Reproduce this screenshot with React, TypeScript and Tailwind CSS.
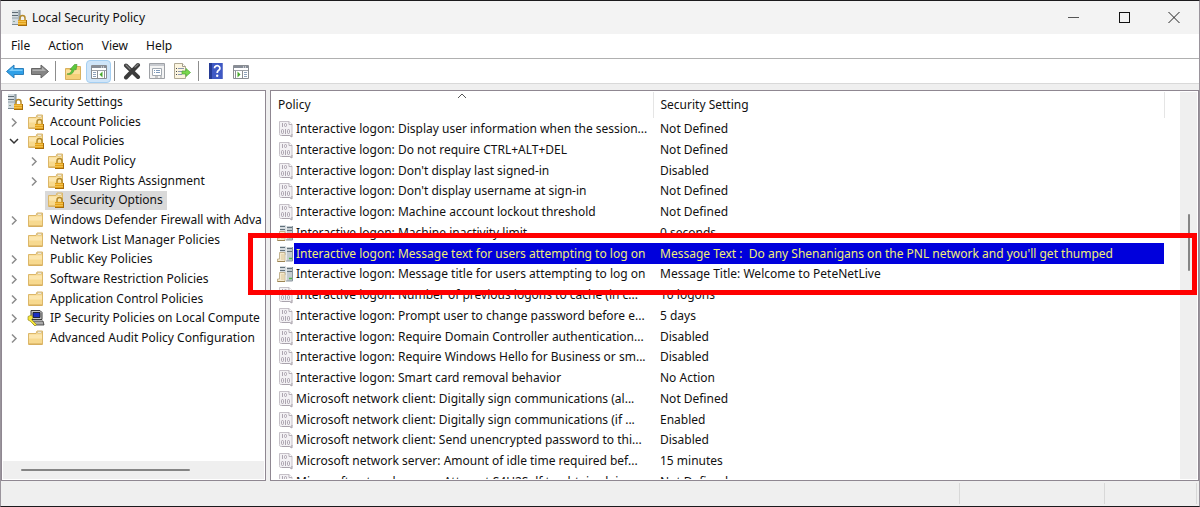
import React from 'react';
import { clsx } from 'clsx';

interface TreeNode {
  label: string;
  level: 0 | 1 | 2;
  icon: 'server' | 'locked' | 'folder' | 'computer';
  state?: 'open' | 'closed';
  selected?: boolean;
}

interface Policy {
  name: string;
  setting: string;
  icon?: 'server';
  selected?: boolean;
}

const treeNodes: TreeNode[] = [
  { label: 'Security Settings', level: 0, icon: 'server' },
  { label: 'Account Policies', level: 1, icon: 'locked', state: 'closed' },
  { label: 'Local Policies', level: 1, icon: 'locked', state: 'open' },
  { label: 'Audit Policy', level: 2, icon: 'locked', state: 'closed' },
  { label: 'User Rights Assignment', level: 2, icon: 'locked', state: 'closed' },
  { label: 'Security Options', level: 2, icon: 'locked', selected: true },
  { label: 'Windows Defender Firewall with Adva', level: 1, icon: 'folder', state: 'closed' },
  { label: 'Network List Manager Policies', level: 1, icon: 'folder' },
  { label: 'Public Key Policies', level: 1, icon: 'folder', state: 'closed' },
  { label: 'Software Restriction Policies', level: 1, icon: 'folder', state: 'closed' },
  { label: 'Application Control Policies', level: 1, icon: 'folder', state: 'closed' },
  { label: 'IP Security Policies on Local Compute', level: 1, icon: 'computer', state: 'closed' },
  { label: 'Advanced Audit Policy Configuration', level: 1, icon: 'folder', state: 'closed' },
];

const policies: Policy[] = [
  { name: 'Interactive logon: Display user information when the session...', setting: 'Not Defined' },
  { name: 'Interactive logon: Do not require CTRL+ALT+DEL', setting: 'Not Defined' },
  { name: "Interactive logon: Don't display last signed-in", setting: 'Disabled' },
  { name: "Interactive logon: Don't display username at sign-in", setting: 'Not Defined' },
  { name: 'Interactive logon: Machine account lockout threshold', setting: 'Not Defined' },
  { name: 'Interactive logon: Machine inactivity limit', setting: '0 seconds', icon: 'server' },
  {
    name: 'Interactive logon: Message text for users attempting to log on',
    setting: "Message Text :  Do any Shenanigans on the PNL network and you'll get thumped",
    icon: 'server',
    selected: true,
  },
  {
    name: 'Interactive logon: Message title for users attempting to log on',
    setting: 'Message Title: Welcome to PeteNetLive',
    icon: 'server',
  },
  { name: 'Interactive logon: Number of previous logons to cache (in c...', setting: '10 logons' },
  { name: 'Interactive logon: Prompt user to change password before e...', setting: '5 days' },
  { name: 'Interactive logon: Require Domain Controller authentication...', setting: 'Disabled' },
  { name: 'Interactive logon: Require Windows Hello for Business or sm...', setting: 'Disabled' },
  { name: 'Interactive logon: Smart card removal behavior', setting: 'No Action' },
  { name: 'Microsoft network client: Digitally sign communications (al...', setting: 'Not Defined' },
  { name: 'Microsoft network client: Digitally sign communications (if ...', setting: 'Enabled' },
  { name: 'Microsoft network client: Send unencrypted password to thi...', setting: 'Disabled' },
  { name: 'Microsoft network server: Amount of idle time required bef...', setting: '15 minutes' },
  { name: 'Microsoft network server: Attempt S4U2Self to obtain claim ...', setting: 'Not Defined' },
];

function Padlock() {
  return (
    <g>
      <path d="M10 11V9a2.5 2.5 0 0 1 5 0v2" fill="none" stroke="#b58a2c" strokeWidth="1.5" />
      <rect x="8" y="11" width="9" height="6" fill="#e3a21c" />
      <path d="M8 12.5h9M8 14.5h9" stroke="#f6c95a" strokeWidth="0.8" />
      <path d="M8 16.5h9M16.5 11v6" stroke="#a56c0d" strokeWidth="1" />
    </g>
  );
}

function ServerLockIcon({ className }: { className?: string }) {
  return (
    <svg viewBox="0 0 18 18" className={className} aria-hidden="true">
      <path d="M2 1h8v15H2z" fill="#aab5bc" />
      <path d="M2 1h6v15H2z" fill="#d3dbe0" />
      <path d="M2 3.500h6M2 6.500h6" stroke="#5e6b75" />
      <path d="M2 9h6" stroke="#93a0a9" />
      <path d="M10 1v9" stroke="#7d8a93" />
      <path d="M2 15.500h7" stroke="#7d8a93" />
      <path d="M3 12.500h2" stroke="#8fa59a" />
      <Padlock />
    </svg>
  );
}

function FolderIcon({ locked, className }: { locked?: boolean; className?: string }) {
  return (
    <svg viewBox="0 0 18 18" className={className} aria-hidden="true">
      <path d="M1.500 4.500h7.500l1-2.500h5.500v13.500h-14z" fill="#f7d98f" stroke="#dcb769" />
      <path d="M2 5.500h13v4H2z" fill="#fce6ae" />
      <path d="M10.500 2.500h4v1.500h-4z" fill="#fff" stroke="#c9b37c" strokeWidth="0.6" />
      <path d="M2 15h13" stroke="#d0a654" />
      {locked && <Padlock />}
    </svg>
  );
}

function ComputerIcon({ className }: { className?: string }) {
  return (
    <svg viewBox="0 0 18 18" className={className} aria-hidden="true">
      <path d="M4 1.500h9l2 2v7H5l-1-2z" fill="#c4c4c4" stroke="#3a3a3a" />
      <path d="M6 3.500h7v5H6z" fill="#1b2fc0" stroke="#111" strokeWidth="0.8" />
      <path d="M5 12h11l1 4H7z" fill="#a9a9a9" stroke="#333" strokeWidth="0.8" />
      <path d="M1 7.500 4.500 6l1.500 3-1.500 1.500 5 5-1.500 1.500-5-5L1 11z" fill="#f5e53b" stroke="#8a7c10" strokeWidth="0.6" />
    </svg>
  );
}

function BinaryDocIcon({ className }: { className?: string }) {
  return (
    <svg viewBox="0 0 16 18" className={className} aria-hidden="true">
      <path d="M1.500 1.500h9.500l3 3v9.500c0 2-1 2.500-2 1.500H3c-1.500 0-1.500-1-1.500-2z" fill="#f3f1f4" stroke="#c6c1c8" />
      <path d="M11 1.500v3h3" fill="#fff" stroke="#b5afb8" />
      <path d="M4 15.500h7.500l2.500 1.500v-3" fill="none" stroke="#aaa4ad" />
      <g fill="none" stroke="#a49ca8" strokeWidth="0.9">
        <path d="M4.500 3v4M7.500 9v5" />
        <rect x="6.500" y="3.500" width="2" height="3" rx="1" />
        <rect x="3.500" y="9.500" width="2" height="4" rx="1" />
        <rect x="9.500" y="9.500" width="2" height="4" rx="1" />
      </g>
    </svg>
  );
}

function ServerPolicyIcon({ className }: { className?: string }) {
  return (
    <svg viewBox="0 0 17 18" className={className} aria-hidden="true">
      <path d="M3 1h6v9H3z" fill="#d5dbdf" />
      <path d="M9 2h7v14H9z" fill="#c2cacf" />
      <path d="M3 2.500h5M3 5.500h5M10 3.500h5M10 6.500h5" stroke="#62717b" />
      <path d="M9.500 2v14" stroke="#e7ebed" />
      <path d="M15.500 2v14H9" fill="none" stroke="#89959d" />
      <path d="M12 13.500h3" stroke="#4fb548" strokeWidth="1.500" />
      <path d="M2.500 7.500h5.500v9H.5v-2.500h2z" fill="#f5ead0" stroke="#b8a57c" strokeWidth="0.8" />
      <path d="M4 10h3M4 12h3M4 14h3" stroke="#d2bd8e" strokeWidth="0.8" />
      <path d="M.5 16.500h7.500" stroke="#9c8555" />
    </svg>
  );
}

function Chevron({ open }: { open?: boolean }) {
  return (
    <svg viewBox="0 0 12 12" className="size-3" fill="none" aria-hidden="true">
      {open ? (
        <path d="M2 4l4 4 4-4" stroke="#333" strokeWidth="1.5" />
      ) : (
        <path d="M4 2.500l4 4-4 4" stroke="#8c8c8c" strokeWidth="1.5" />
      )}
    </svg>
  );
}

function ArrowIcon({ forward }: { forward?: boolean }) {
  return forward ? (
    <svg viewBox="0 0 18 18" className="size-[18px]" aria-hidden="true">
      <path d="M.5 6.500H10V3l7.500 6.500L10 16v-3.500H.5z" fill="#858585" stroke="#666" />
      <path d="M1.500 7.500H11V5l4 4h-13.500z" fill="#b0b0b0" />
    </svg>
  ) : (
    <svg viewBox="0 0 18 18" className="size-[18px]" aria-hidden="true">
      <path d="M17.500 6.500H8V3L.5 9.500 8 16v-3.500h9.500z" fill="#2fa0e8" stroke="#2c7fbb" />
      <path d="M16.500 7.500H7V5L3 9h13.500z" fill="#79cbfa" />
    </svg>
  );
}

function UpFolderIcon() {
  return (
    <svg viewBox="0 0 18 18" className="size-[18px]" aria-hidden="true">
      <path d="M1.500 6.500h9l1-2h5v13h-15z" fill="#f5d078" stroke="#d8b05e" />
      <path d="M2 8h14v4H2z" fill="#fbe09b" />
      <path d="M3 12c3 0 4.500-2 5-4.500H6L10.500 2.500H13L12 8l-1.500-1C9.500 11 7 13.500 3 12z" fill="#5cc93d" stroke="#4d9c35" strokeWidth="0.7" />
    </svg>
  );
}

function PanelIcon({ side }: { side: 'left' | 'right' }) {
  return (
    <svg viewBox="0 0 18 18" className="size-[18px]" aria-hidden="true">
      <path d="M1.500 3.500h15v13h-15z" fill="#fff" stroke="#8a8d92" />
      <path d="M2 4h14v2H2z" fill="#878d97" />
      <path d="M11 5h1M13 5h1" stroke="#fff" />
      <path d="M2 8.500h14" stroke="#9da1a8" />
      {side === 'left' ? (
        <>
          <path d="M7.500 9v7M14.500 9v7" stroke="#8a8d92" />
          <path d="M3 10.500h3M3 12.500h3M3 14.500h3" stroke="#8fa3bb" />
          <path d="M12.500 9.500v6l-3-3z" fill="#48a92d" />
        </>
      ) : (
        <>
          <path d="M10.500 9v7M3.500 9v7" stroke="#8a8d92" />
          <path d="M12 10.500h3M12 12.500h3M12 14.500h3" stroke="#8fa3bb" />
          <path d="M5.500 9.500v6l3-3z" fill="#48a92d" />
        </>
      )}
    </svg>
  );
}

function DeleteIcon() {
  return (
    <svg viewBox="0 0 18 18" className="size-[18px]" aria-hidden="true">
      <path d="M3 3.500l12 11.500M15 3L3 15.500" stroke="#3c3c3c" strokeWidth="4" strokeLinecap="round" />
      <path d="M3 3l4 4M12 5l3-2.500" stroke="#808080" strokeWidth="1.200" strokeLinecap="round" />
    </svg>
  );
}

function PropertiesIcon() {
  return (
    <svg viewBox="0 0 18 18" className="size-[18px]" aria-hidden="true">
      <path d="M1.500 1.500h15v15h-15z" fill="#f3f3f3" stroke="#9ea1a6" />
      <path d="M2 3h14" stroke="#b9bdc3" strokeWidth="1.5" />
      <path d="M4.500 6.500h9v7h-9z" fill="#fff" stroke="#a2a9b1" />
      <path d="M6 8.500h1M8 8.500h4M6 10.500h1M8 10.500h4" stroke="#7e9abb" />
      <path d="M7 15h3M12 15h2" stroke="#999" />
    </svg>
  );
}

function ExportIcon() {
  return (
    <svg viewBox="0 0 18 18" className="size-[18px]" aria-hidden="true">
      <path d="M1.500 1.500h8l3 3v12h-11z" fill="#fcf5df" stroke="#b0a994" />
      <path d="M9.500 1.500v3h3" fill="#fff" stroke="#a39c88" />
      <path d="M3 6.500h1M3 9.500h1M3 12.500h1" stroke="#444" />
      <path d="M5 6.500h6M5 9.500h4M5 12.500h4" stroke="#8a97b2" />
      <path d="M9 9h4V6.500l4.500 4-4.500 4V12H9z" fill="#7ad84c" stroke="#4fa533" strokeWidth="0.7" />
    </svg>
  );
}

function HelpIcon() {
  return (
    <svg viewBox="0 0 18 18" className="size-[18px]" aria-hidden="true">
      <path d="M2 1h14v16H2z" fill="#3f59c4" />
      <path d="M2 1h3v16H2z" fill="#263b94" />
      <path d="M15.500 1v16" stroke="#6e80cf" />
      <path d="M7.500 6.200a2.700 2.500 0 1 1 4.200 2.100c-1 .7-1.500 1-1.500 2.700" fill="none" stroke="#fff" strokeWidth="1.8" />
      <circle cx="10.200" cy="13.700" r="1.200" fill="#fff" />
    </svg>
  );
}

function ToolButton({ label, active, children }: { label: string; active?: boolean; children: React.ReactNode }) {
  return (
    <button
      aria-label={label}
      className={clsx(
        'flex h-[23px] w-[25px] items-center justify-center rounded-sm border',
        active ? 'border-[#a5cff2] bg-[#cfe5f9]' : 'border-transparent'
      )}
    >
      {children}
    </button>
  );
}

function Separator() {
  return <div className="h-5 w-px bg-[#8d8d8d]" />;
}

function TitleBar() {
  return (
    <header className="flex h-[33px] items-center bg-[#f3f3f3] pl-[9px]">
      <ServerLockIcon className="size-[18px]" />
      <h1 className="flex-1 pl-1">Local Security Policy</h1>
      <button aria-label="Minimize" className="flex h-full w-[50px] items-center justify-center">
        <svg viewBox="0 0 12 12" className="size-3" stroke="#555">
          <path d="M0 5.500h11" />
        </svg>
      </button>
      <button aria-label="Maximize" className="flex h-full w-[50px] items-center justify-center">
        <svg viewBox="0 0 12 12" className="size-3" fill="none" stroke="#111">
          <rect x="1.500" y=".5" width="10" height="10" />
        </svg>
      </button>
      <button aria-label="Close" className="flex h-full w-[50px] items-center justify-center">
        <svg viewBox="0 0 12 12" className="size-3" stroke="#222">
          <path d="M.5 0l11 11M11.500 0l-11 11" />
        </svg>
      </button>
    </header>
  );
}

function Toolbar() {
  return (
    <div className="flex h-[25px] items-center border-b border-[#d9d9d9] pl-px">
      <ToolButton label="Back"><ArrowIcon /></ToolButton>
      <ToolButton label="Forward"><ArrowIcon forward /></ToolButton>
      <div className="flex items-center gap-px pl-[3px]">
        <Separator />
        <div className="w-0.5" />
        <ToolButton label="Up one level"><UpFolderIcon /></ToolButton>
        <ToolButton label="Show or hide console tree" active><PanelIcon side="left" /></ToolButton>
      </div>
      <div className="flex items-center gap-1 pl-[3px]">
        <Separator />
        <div className="flex">
          <ToolButton label="Delete"><DeleteIcon /></ToolButton>
          <ToolButton label="Properties"><PropertiesIcon /></ToolButton>
          <ToolButton label="Export list"><ExportIcon /></ToolButton>
        </div>
        <Separator />
        <div className="flex">
          <ToolButton label="Help"><HelpIcon /></ToolButton>
          <ToolButton label="Show or hide action pane"><PanelIcon side="right" /></ToolButton>
        </div>
      </div>
    </div>
  );
}

function TreeIcon({ icon }: { icon: TreeNode['icon'] }) {
  if (icon === 'server') return <ServerLockIcon className="size-[18px] shrink-0" />;
  if (icon === 'computer') return <ComputerIcon className="size-[18px] shrink-0" />;
  return <FolderIcon locked={icon === 'locked'} className="size-[18px] shrink-0" />;
}

function TreeRow({ node, short }: { node: TreeNode; short: boolean }) {
  return (
    <li className={clsx('flex items-center', short ? 'h-[19px]' : 'h-5', node.level === 2 && 'pl-5')}>
      {node.level > 0 && (
        <div className="flex w-[22px] shrink-0 justify-center">
          {node.state && (
            <button aria-label={`Toggle ${node.label}`}>
              <Chevron open={node.state === 'open'} />
            </button>
          )}
        </div>
      )}
      <button
        className={clsx(
          'flex h-[19px] items-center gap-[5px] whitespace-nowrap pr-1',
          node.level === 0 ? 'pl-[3px]' : 'pl-0.5',
          node.selected && 'bg-[#d9d9d9]'
        )}
      >
        <TreeIcon icon={node.icon} />
        {node.label}
      </button>
    </li>
  );
}

function TreePane() {
  return (
    <nav className="flex w-[265px] shrink-0 flex-col border border-[#8f8791] bg-white p-px" aria-label="Console tree">
      <ul className="min-h-0 flex-1 overflow-hidden">
        {treeNodes.map((node, i) => (
          <TreeRow key={node.label} node={node} short={i % 3 === 1} />
        ))}
      </ul>
      <div className="flex h-[18px] items-center bg-[#efefef] px-[18px]">
        <div className="h-0.5 w-3/4 rounded-full bg-[#858585]" />
      </div>
    </nav>
  );
}

function PolicyRow({ policy, short }: { policy: Policy; short: boolean }) {
  const height = short ? 'h-5' : 'h-[21px]';
  const colors = policy.selected ? 'bg-[#0000dc] text-[#f0ee78]' : '';
  return (
    <tr>
      <td className="p-0">
        <div className={clsx('flex items-center overflow-hidden pl-[5px]', height)}>
          {policy.icon === 'server' ? (
            <ServerPolicyIcon className="h-[18px] w-[17px] shrink-0" />
          ) : (
            <BinaryDocIcon className="ml-px h-[18px] w-4 shrink-0" />
          )}
          <span className={clsx('flex flex-1 items-center whitespace-nowrap pl-0.5', height, colors)}>{policy.name}</span>
        </div>
      </td>
      <td className="p-0">
        <div className={clsx('flex items-center overflow-hidden whitespace-pre pl-[7px]', height, colors)}>
          {policy.setting}
        </div>
      </td>
      <td className="p-0" />
    </tr>
  );
}

function PolicyPane() {
  return (
    <main className="flex min-w-0 flex-1 border border-[#8f8791] bg-white p-px">
      <div className="min-w-0 flex-1 overflow-hidden">
        <table className="w-full table-fixed border-collapse text-left">
          <colgroup>
            <col className="w-[381px]" />
            <col />
            <col className="w-4" />
          </colgroup>
          <thead>
            <tr className="h-[26px]">
              <th className="relative border-r border-[#e5e5e5] p-0 pl-1.5 font-normal">
                Policy
                <svg viewBox="0 0 10 6" className="absolute inset-x-0 top-px mx-auto h-1.5 w-2.5" fill="none" stroke="#555" aria-hidden="true">
                  <path d="M1 5l4-4 4 4" />
                </svg>
              </th>
              <th className="border-r border-[#e5e5e5] p-0 pl-[7px] font-normal">Security Setting</th>
              <td />
            </tr>
          </thead>
          <tbody>
            {policies.map((policy, i) => (
              <PolicyRow key={policy.name} policy={policy} short={i % 4 === 3} />
            ))}
          </tbody>
        </table>
      </div>
      <div className="flex w-[17px] justify-center bg-[#efefef] pt-[122px]">
        <div className="h-[57px] w-0.5 rounded-full bg-[#858585]" />
      </div>
    </main>
  );
}

export default function App() {
  return (
    <div className="relative flex h-screen flex-col overflow-hidden border border-x-[#9a949c] border-y-[#1c1a1d] bg-[#efefef] font-['Noto_Sans','Open_Sans',sans-serif] text-xs text-[#111111]">
      <TitleBar />
      <div className="bg-white">
        <nav className="flex h-6 items-center gap-[18px] pl-2.5" aria-label="Menu">
          <button>File</button>
          <button>Action</button>
          <button>View</button>
          <button>Help</button>
        </nav>
        <div className="h-px bg-[#b0b0b0]" />
        <Toolbar />
      </div>
      <div className="flex min-h-0 flex-1 gap-1 pt-1.5">
        <TreePane />
        <PolicyPane />
      </div>
      <footer className="flex h-[25px] justify-end py-0.5">
        <div className="w-[145px] border-l border-[#d8d8d8]" />
        <div className="w-[93px] border-x border-[#d8d8d8]" />
        <div className="w-0.5" />
      </footer>
      {/* Highlight over the logon message policies */}
      <div className="pointer-events-none absolute left-[247px] right-0.5 top-[232px] h-[62px] border-5 border-[#ff0000]" />
    </div>
  );
}
